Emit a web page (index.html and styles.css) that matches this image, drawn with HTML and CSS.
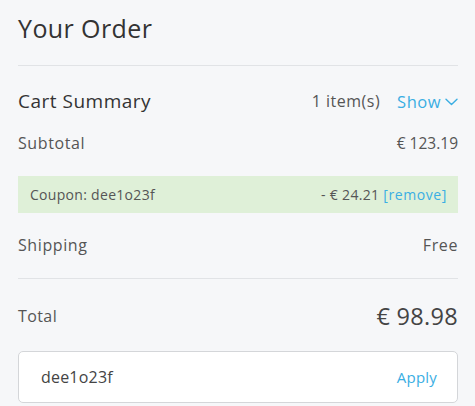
FILE: index.html
```html
<!DOCTYPE html>
<html>
<head>
<meta charset="utf-8">
<link rel="stylesheet" href="styles.css">
</head>
<body>
<div class="order">
  <div class="header"><h1 class="title">Your Order</h1></div>
  <div class="row cart">
    <span class="cart-title">Cart Summary</span>
    <span class="cart-right"><span class="items">1 item(s)</span><a class="show">Show<svg class="chev" width="13" height="8" viewBox="0 0 13 8"><path d="M1 1.2 L6.5 6.5 L12 1.2" fill="none" stroke="#3aaee3" stroke-width="1.4" stroke-linecap="round" stroke-linejoin="round"/></svg></a></span>
  </div>
  <div class="row line subtotal"><span>Subtotal</span><span class="amount">€ 123.19</span></div>
  <div class="coupon"><span>Coupon: dee1o23f</span><span>- € 24.21 <a class="remove">[remove]</a></span></div>
  <div class="row line shipping"><span>Shipping</span><span>Free</span></div>
  <div class="divider"></div>
  <div class="row total"><span class="total-label">Total</span><span class="total-value">€ 98.98</span></div>
  <div class="code-box"><span class="code">dee1o23f</span><a class="apply">Apply</a></div>
</div>
</body>
</html>
```
FILE: styles.css
```css
html, body {
  margin: 0;
  padding: 0;
  background: #f6f7f9;
}
body {
  font-family: "Open Sans", "Lato", sans-serif;
  color: #444;
}
.order {
  padding: 0 17px 0 18px;
  display: flex;
  flex-direction: column;
}
.header {
  height: 65px;
  border-bottom: 1px solid #e1e3e6;
  display: flex;
  align-items: center;
}
.title {
  margin: 0;
  font-weight: 400;
  font-size: 25px;
  letter-spacing: 0.4px;
  color: #333;
  line-height: 1;
  position: relative;
  top: -4px;
}
.row {
  display: flex;
  justify-content: space-between;
  align-items: center;
}
.cart {
  margin-top: 17px;
  height: 36px;
}
.cart-title {
  font-size: 19px;
  letter-spacing: 0.5px;
  color: #333;
}
.cart-right {
  display: flex;
  align-items: center;
  gap: 17px;
}
.items {
  font-size: 16px;
  letter-spacing: 0.5px;
  color: #555;
}
.show {
  color: #3aaee3;
  font-size: 16.5px;
  letter-spacing: 0.5px;
  display: flex;
  align-items: center;
  gap: 4px;
}
.chev {
  margin-top: 1px;
}
.line {
  height: 24px;
  font-size: 16px;
  letter-spacing: 0.6px;
  color: #555;
}
.amount {
  font-size: 15.5px;
  letter-spacing: 0;
}
.subtotal { margin-top: 12px; }
.coupon {
  margin-top: 21px;
  height: 37px;
  background: #dff0d8;
  display: flex;
  justify-content: space-between;
  align-items: center;
  padding: 0 11px 0 12px;
  font-size: 14px;
  letter-spacing: 0.3px;
  color: #555;
}
.remove { color: #3aaee3; letter-spacing: 0.6px; }
.shipping { margin-top: 20px; }
.divider {
  margin-top: 21px;
  height: 1px;
  background: #e1e3e6;
}
.total {
  margin-top: 21px;
  height: 32px;
}
.total-label {
  font-size: 16px;
  letter-spacing: 0.4px;
  color: #555;
}
.total-value {
  font-size: 23.5px;
  letter-spacing: 0.3px;
  color: #444;
}
.code-box {
  margin-top: 19px;
  height: 50px;
  background: #fff;
  border: 1px solid #d4d6d9;
  border-radius: 5px;
  display: flex;
  justify-content: space-between;
  align-items: center;
  padding: 0 20px 0 22px;
}
.code {
  font-size: 16px;
  letter-spacing: 0.2px;
  color: #444;
}
.apply {
  font-size: 15px;
  letter-spacing: 0.2px;
  color: #3aaee3;
}
```
